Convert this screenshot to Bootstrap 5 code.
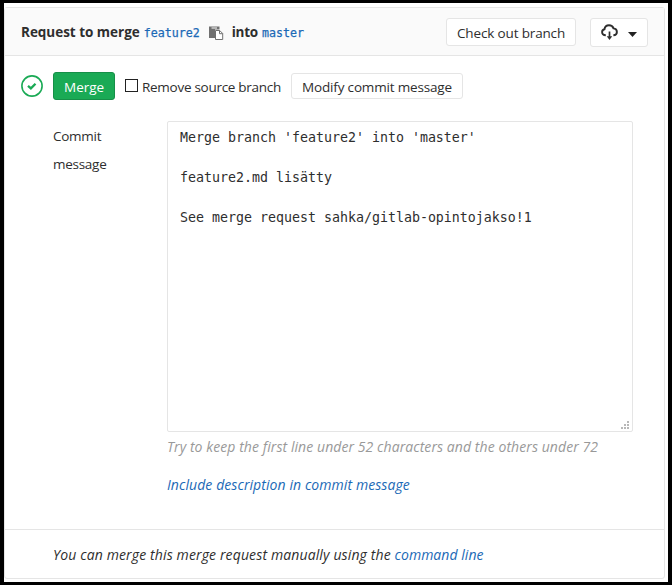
<!DOCTYPE html>
<html lang="en">
<head>
<meta charset="utf-8">
<meta name="viewport" content="width=device-width, initial-scale=1">
<title>Merge request</title>
<link href="https://cdn.jsdelivr.net/npm/bootstrap@5.3.0/dist/css/bootstrap.min.css" rel="stylesheet">
<script src="https://cdn.jsdelivr.net/npm/bootstrap@5.3.0/dist/js/bootstrap.bundle.min.js"></script>
<style>
body{width:672px;height:585px;overflow:hidden;background:#fff;border:solid #000;border-width:3px 4px;color:#2e2e2e;font:13.5px/20px "Open Sans","Noto Sans",sans-serif}
a{color:#1b69b6;text-decoration:none}
.mr-panel{width:661px;height:572px;margin-top:4px;border:1px solid #e5e5e5;border-radius:3px}
.mr-head{height:48px;padding:0 16px;background:#fafafa;border-bottom:1px solid #e5e5e5}
.mr-title{letter-spacing:-.02px;white-space:pre}
.mr-ref{padding-top:2px;font:11.63px/20px "DejaVu Sans Mono","Liberation Mono",monospace;-webkit-text-stroke:.25px #1b69b6}
.mr-copy{margin:3px 0 0 9px}
.mr-into{margin:0 4px 0 8px;letter-spacing:-.25px}
.mr-btn{--bs-btn-font-size:13.5px;--bs-btn-line-height:20px;--bs-btn-padding-x:10px;--bs-btn-padding-y:0;--bs-btn-border-radius:3px;--bs-btn-color:#2e2e2e;--bs-btn-bg:#fff;--bs-btn-border-color:#e5e5e5;--bs-btn-hover-bg:#f0f0f0;--bs-btn-hover-color:#2e2e2e;--bs-btn-hover-border-color:#ddd;white-space:nowrap}
.btn-checkout{width:130px;height:28px;padding-top:2px;letter-spacing:-.15px}
.btn-download{width:58px;height:29px;margin:2px 0 0 14px}
.btn-merge{--bs-btn-color:#fff;--bs-btn-bg:#1aaa55;--bs-btn-border-color:#168f48;--bs-btn-hover-color:#fff;--bs-btn-hover-bg:#168f48;width:62px;height:28px;padding-top:2px;margin-left:10px}
.btn-modify{width:172px;height:26px;margin-left:10px;padding-top:2px;letter-spacing:-.17px}
.mr-actions{padding:15px 0 0 16px;height:45px}
.mr-check{width:13px;height:13px;margin:0 4px 2px 10px;border:1px solid #222;border-radius:0!important}
.mr-remove{padding-top:2px;letter-spacing:-.28px}
.mr-form{padding:20px 0 0 48px;height:428px}
.mr-label{width:114px;padding-top:1px;line-height:28px;letter-spacing:-.27px}
.mr-text{width:466px;height:311px;padding:6px 12px;border:1px solid #e5e5e5;border-radius:2px;resize:none;color:#2e2e2e;font:13.29px/20px "DejaVu Sans Mono","Liberation Mono",monospace}
.mr-grip{position:absolute;right:3px;bottom:2px}
.mr-hint{font-size:14px;font-style:italic;white-space:nowrap}
.mr-muted{padding-top:5px;color:#999;letter-spacing:.075px}
.mr-include{padding-top:18px;letter-spacing:.08px}
.mr-foot{border-top:1px solid #e5e5e5;padding:15px 0 0 48px;letter-spacing:.13px}
.mr-foot a{letter-spacing:.04px}
</style>
</head>
<body>
<main class="mr-panel">
  <header class="mr-head d-flex align-items-center">
    <strong class="mr-title">Request to merge</strong>
    <a href="#" class="mr-ref ms-1">feature2</a>
    <svg class="mr-copy" width="15" height="15" viewBox="0 0 15 15"><path fill="#707070" d="M0 .5h10.500v3H6V12H0z"/><path fill="#fafafa" d="M2.500 1.500H8v1H2.500z"/><path fill="#fff" stroke="#707070" d="M6.500 4.500h4.200l3 3v6H6.500z"/><path fill="none" stroke="#707070" d="M10.500 4.500v3.200h3.200"/></svg>
    <strong class="mr-into">into</strong>
    <a href="#" class="mr-ref">master</a>
    <button class="btn mr-btn btn-checkout ms-auto">Check out branch</button>
    <button class="btn mr-btn btn-download d-flex align-items-center" aria-label="Download">
      <svg width="17" height="17" viewBox="0 0 17 17" fill="none" stroke="#2e2e2e" stroke-width="1.900"><path d="M4.800 11.200C2.500 11.200 1.100 9.700 1.100 8c0-1.500.9-2.500 2.400-2.800C3.800 3 5.500 1.300 8 1.300c2.200 0 3.800 1.100 4.500 3.100 2.100.2 3.400 1.600 3.400 3.500 0 1.900-1.400 3.200-3.500 3.300"/><path d="M8.500 7.500V13" stroke-width="1.700"/><path d="M5.800 12.300h5.400L8.500 16z" fill="#2e2e2e" stroke="none"/></svg>
      <svg class="ms-auto mt-1" width="9" height="5" viewBox="0 0 9 5"><path d="M0 0h9L4.500 5z" fill="#222"/></svg>
    </button>
  </header>
  <section class="mr-actions d-flex align-items-center">
    <svg width="22" height="22" viewBox="0 0 22 22" fill="none" stroke="#1aaa55"><circle cx="11" cy="11" r="10.100" stroke-width="1.600"/><path d="M7 10.800l2.900 2.600 4.600-4.600" stroke-width="2.300"/></svg>
    <button class="btn mr-btn btn-merge">Merge</button>
    <input type="checkbox" id="remove" class="form-check-input mr-check">
    <label class="mr-remove" for="remove">Remove source branch</label>
    <button class="btn mr-btn btn-modify">Modify commit message</button>
  </section>
  <section class="mr-form d-flex">
    <label class="mr-label flex-shrink-0" for="message">Commit<br>message</label>
    <div>
      <div class="position-relative">
        <textarea id="message" class="mr-text d-block" spellcheck="false">Merge branch 'feature2' into 'master'

feature2.md lisätty

See merge request sahka/gitlab-opintojakso!1</textarea>
        <svg class="mr-grip" width="9" height="9" viewBox="0 0 9 9" fill="#b8b8b8" shape-rendering="crispEdges"><path d="M6 0h2v2H6zM3 3h2v2H3zM6 3h2v2H6zM0 6h2v2H0zM3 6h2v2H3zM6 6h2v2H6z"/></svg>
      </div>
      <p class="mr-hint mr-muted mb-0">Try to keep the first line under 52 characters and the others under 72</p>
      <p class="mr-hint mr-include mb-0"><a href="#">Include description in commit message</a></p>
    </div>
  </section>
  <footer class="mr-foot mr-hint">You can merge this merge request manually using the <a href="#">command line</a></footer>
</main>
</body>
</html>
